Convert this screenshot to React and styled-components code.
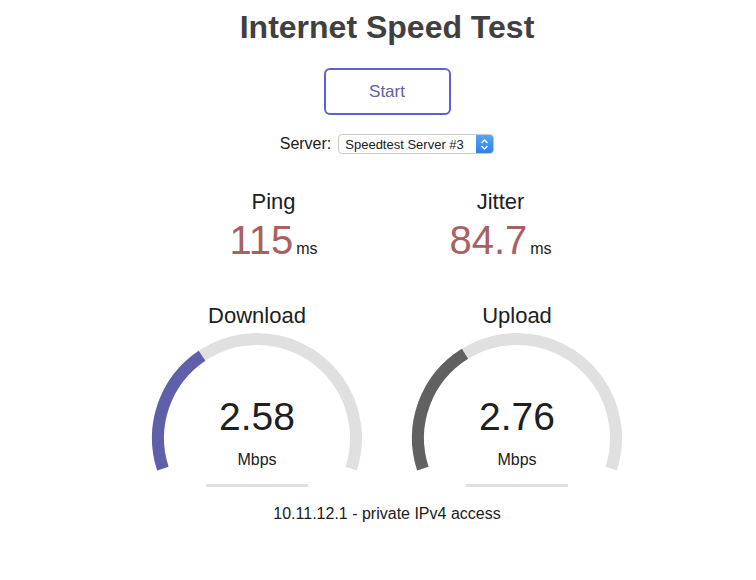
import React from 'react';
import styled, { createGlobalStyle } from 'styled-components';

const GlobalStyle = createGlobalStyle`
  body {
    margin: 0;
    background: #fff;
    font-family: "Liberation Sans", Arial, sans-serif;
    color: #202020;
  }
`;

const Page = styled.div`
  display: flex;
  flex-direction: column;
  align-items: center;
  padding-left: 18px;
  text-align: center;
`;

const Title = styled.h1`
  margin: 10px 0 0;
  font-size: 32px;
  line-height: 34px;
  font-weight: bold;
  color: #404040;
`;

const StartButton = styled.button`
  margin-top: 24px;
  width: 127px;
  height: 47px;
  border: 2px solid #5f5fd6;
  border-radius: 6px;
  background: #fff;
  color: #6060aa;
  font-family: inherit;
  font-size: 17px;
  cursor: pointer;
`;

const ServerRow = styled.div`
  margin-top: 19px;
  display: flex;
  align-items: center;
  gap: 7px;
  font-size: 16px;
  color: #202020;
`;

const SelectBox = styled.div`
  display: flex;
  align-items: stretch;
  width: 156px;
  height: 20px;
  box-sizing: border-box;
  border: 1px solid #c8c8c8;
  border-radius: 4px;
  overflow: hidden;
  background: #fff;
`;

const Select = styled.select`
  flex: 1;
  appearance: none;
  border: none;
  background: transparent;
  padding: 0 0 0 6px;
  font-family: inherit;
  font-size: 13px;
  color: #202020;
  outline: none;
`;

const Stepper = styled.span`
  width: 17px;
  display: flex;
  align-items: center;
  justify-content: center;
  background: linear-gradient(#5aa2fb, #2f7ff0);
`;

const Row = styled.div`
  display: flex;
  justify-content: center;
  margin-top: ${p => p.$top}px;
`;

const Stat = styled.div`
  width: ${p => p.$w}px;
  display: flex;
  flex-direction: column;
  align-items: center;
`;

const Label = styled.div`
  font-size: 22px;
  line-height: 24px;
  color: #202020;
`;

const Value = styled.div`
  display: flex;
  align-items: baseline;
  gap: 3px;
  margin-top: 4px;
  color: #aa6060;
  font-size: 40px;
  line-height: 44px;
`;

const Unit = styled.span`
  font-size: 16px;
  color: #202020;
`;

const GaugeBox = styled.div`
  position: relative;
  width: 260px;
  height: 162px;
  margin-top: 2px;
  display: flex;
  flex-direction: column;
  align-items: center;
`;

const GaugeSvg = styled.svg`
  position: absolute;
  top: 0;
  left: 0;
`;

const Speed = styled.div`
  position: relative;
  margin-top: 67px;
  font-size: 39px;
  line-height: 40px;
  color: #202020;
`;

const SpeedUnit = styled.div`
  position: relative;
  margin-top: 13px;
  font-size: 16px;
  line-height: 20px;
  color: #202020;
`;

const Footer = styled.div`
  margin-top: 13px;
  font-size: 16px;
  color: #202020;
`;

const CX = 130;
const CY = 108;
const R = 99;
const START = 162;
const SPAN = 216;

const pt = deg => {
  const a = (deg * Math.PI) / 180;
  return [CX + R * Math.cos(a), CY + R * Math.sin(a)];
};

const arc = (from, to) => {
  const [x1, y1] = pt(from);
  const [x2, y2] = pt(to);
  const large = to - from > 180 ? 1 : 0;
  return `M ${x1} ${y1} A ${R} ${R} 0 ${large} 1 ${x2} ${y2}`;
};

const mbpsToAmount = s => 1 - 1 / Math.pow(1.3, Math.sqrt(s));

const Gauge = ({ label, value, color }) => {
  const amount = mbpsToAmount(value);
  return (
    <Stat $w={260}>
      <Label>{label}</Label>
      <GaugeBox>
        <GaugeSvg width="260" height="162" viewBox="0 0 260 162">
          <path d={arc(START, START + SPAN)} fill="none" stroke="#e0e0e0" strokeWidth="12" />
          <path d={arc(START, START + SPAN * amount)} fill="none" stroke={color} strokeWidth="12" />
          <rect x="79" y="154" width="102" height="3" fill="#e0e0e0" />
        </GaugeSvg>
        <Speed>{value.toFixed(2)}</Speed>
        <SpeedUnit>Mbps</SpeedUnit>
      </GaugeBox>
    </Stat>
  );
};

export default function App() {
  return (
    <>
      <GlobalStyle />
      <Page>
        <Title>Internet Speed Test</Title>
        <StartButton>Start</StartButton>
        <ServerRow>
          Server:
          <SelectBox>
            <Select defaultValue="3">
              <option value="3">Speedtest Server #3</option>
            </Select>
            <Stepper>
              <svg width="9" height="13" viewBox="0 0 9 13">
                <path d="M1.5 5 L4.5 2 L7.5 5 M1.5 8 L4.5 11 L7.5 8" fill="none" stroke="#fff" strokeWidth="1.4" />
              </svg>
            </Stepper>
          </SelectBox>
        </ServerRow>
        <Row $top={36}>
          <Stat $w={227}>
            <Label>Ping</Label>
            <Value>115<Unit>ms</Unit></Value>
          </Stat>
          <Stat $w={227}>
            <Label>Jitter</Label>
            <Value>84.7<Unit>ms</Unit></Value>
          </Stat>
        </Row>
        <Row $top={33}>
          <Gauge label="Download" value={2.58} color="#6060aa" />
          <Gauge label="Upload" value={2.76} color="#616161" />
        </Row>
        <Footer>10.11.12.1 - private IPv4 access</Footer>
      </Page>
    </>
  );
}
